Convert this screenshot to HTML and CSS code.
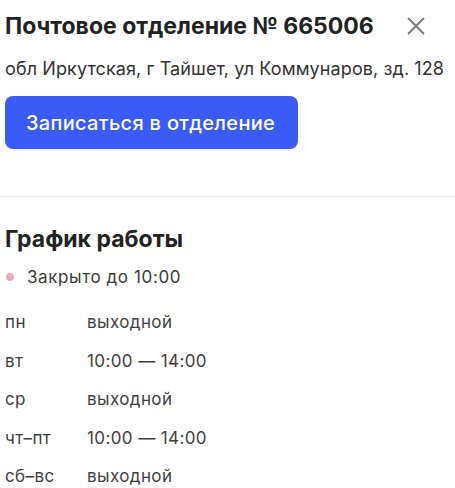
FILE: index.html
```html
<!DOCTYPE html>
<html lang="ru">
<head>
    <meta charset="UTF-8">
    <meta name="viewport" content="width=device-width, initial-scale=1.0">
    <title>Почтовое отделение № 665006</title>
    <link rel="stylesheet" href="styles.css">
</head>
<body>
    <div class="panel">
        <div class="office">
            <div class="office-head">
                <h1>Почтовое отделение № 665006</h1>
                <button class="close" aria-label="Закрыть">
                    <svg width="18" height="18" viewBox="0 0 18 18">
                        <path d="M1 1 L17 17 M17 1 L1 17" stroke="#7b7b82" stroke-width="2" fill="none"/>
                    </svg>
                </button>
            </div>
            <p class="address">обл Иркутская, г Тайшет, ул Коммунаров, зд. 128</p>
            <button class="book-button">Записаться в отделение</button>
        </div>

        <div class="schedule">
            <h2>График работы</h2>
            <div class="status"><span class="dot"></span>Закрыто до 10:00</div>
            <div class="days">
                <span>пн</span><span>выходной</span>
                <span>вт</span><span>10:00 — 14:00</span>
                <span>ср</span><span>выходной</span>
                <span>чт–пт</span><span>10:00 — 14:00</span>
                <span>сб–вс</span><span>выходной</span>
            </div>
        </div>
    </div>
</body>
</html>
```

FILE: styles.css
```css
body {
    font-family: 'Inter', 'Noto Sans', sans-serif;
    background-color: #fff;
    color: #333;
    margin: 0;
    padding: 0;
}

.panel {
    width: 455px;
}

.office {
    padding: 6px 5px 47px 5px;
    border-bottom: 1px solid #ebebef;
}

.office-head {
    display: flex;
    justify-content: space-between;
    align-items: center;
}

h1 {
    font-size: 23px;
    font-weight: 700;
    color: #222;
    margin: 0;
    line-height: 40px;
}

.close {
    border: none;
    background: none;
    padding: 0;
    margin-right: 25px;
    width: 18px;
    height: 18px;
    cursor: pointer;
}

.address {
    font-size: 18px;
    letter-spacing: 0.1px;
    color: #333;
    margin: 11px 0 0 0;
    line-height: 24px;
}

.book-button {
    margin-top: 15px;
    width: 293px;
    height: 53px;
    background-color: #3a5bf6;
    color: #fff;
    border: none;
    border-radius: 8px;
    font-family: inherit;
    font-size: 20px;
    letter-spacing: 0.3px;
    font-weight: 500;
    text-align: left;
    padding: 0 0 0 21px;
    cursor: pointer;
}

.schedule {
    padding: 26px 5px 0 5px;
}

h2 {
    font-size: 23px;
    font-weight: 700;
    color: #222;
    margin: 0;
    line-height: 32px;
}

.status {
    display: flex;
    align-items: center;
    font-size: 17px;
    letter-spacing: 0.6px;
    color: #3a3a3a;
    margin-top: 10px;
    line-height: 24px;
}

.dot {
    width: 8px;
    height: 8px;
    border-radius: 50%;
    background-color: #e9a9b9;
    margin: 0 13px 0 1px;
}

.days {
    display: grid;
    grid-template-columns: 82px auto;
    row-gap: 14.5px;
    margin-top: 21px;
    font-size: 17px;
    letter-spacing: 0.4px;
    line-height: 24px;
    color: #3f3f3f;
}
```
